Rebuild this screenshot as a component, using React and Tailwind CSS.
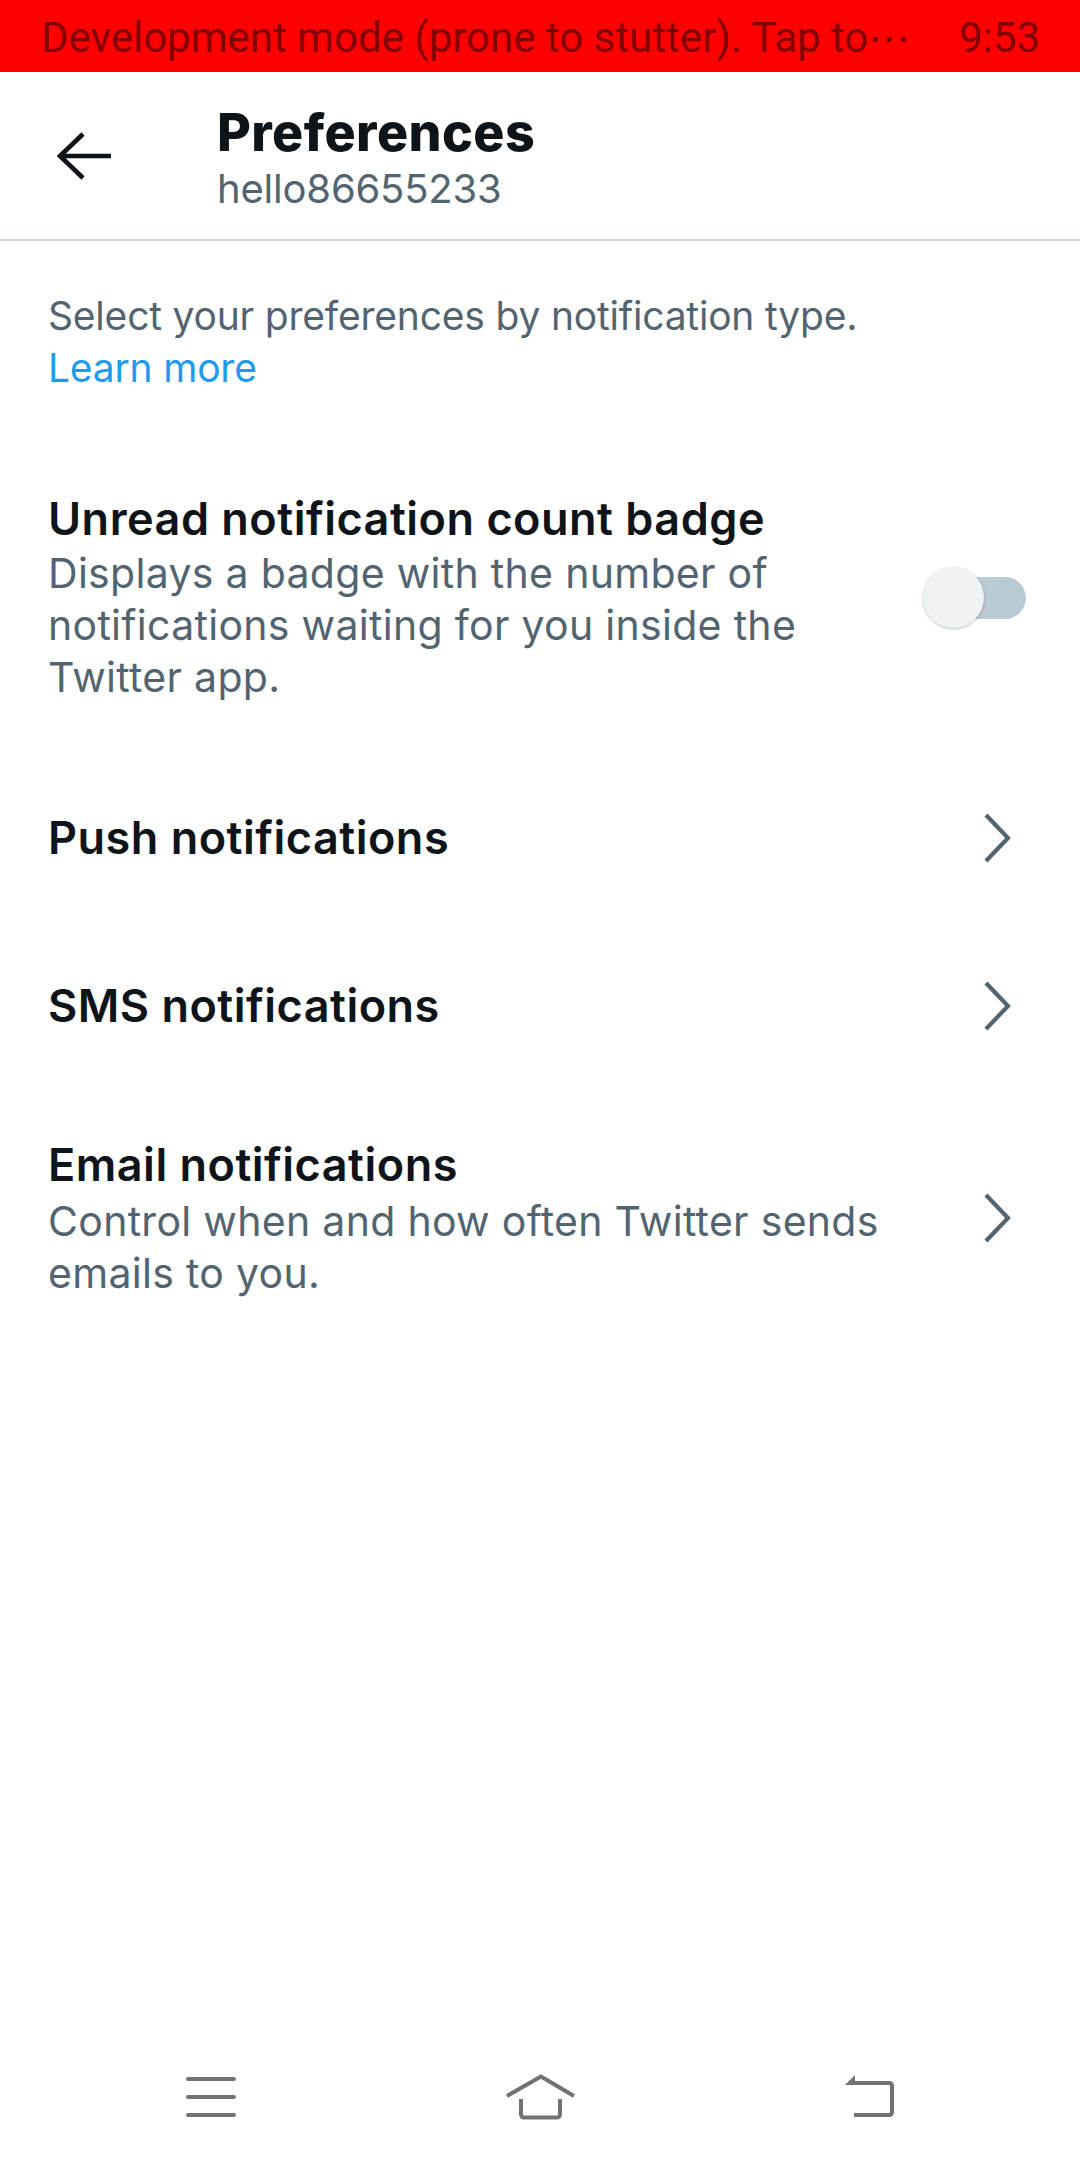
import React from "react";

function Chevron() {
  return (
    <svg width="28" height="50" viewBox="0 0 28 50" fill="none" className="shrink-0">
      <polyline points="3,2 25,25 3,48" stroke="#536471" strokeWidth="4.2" strokeLinejoin="miter" />
    </svg>
  );
}

export default function App() {
  return (
    <div className="w-[1080px] h-[2160px] bg-white flex flex-col font-['Inter','Roboto',sans-serif] overflow-hidden">
      {/* Status / debug bar */}
      <div className="h-[72px] shrink-0 bg-[#ff0000] flex items-center justify-between pl-[41px] pr-[40px] pt-[4px] font-['Roboto',sans-serif] text-[42px] text-[#840000] leading-none">
        <span>Development mode (prone to stutter). Tap to⋯</span>
        <span>9:53</span>
      </div>

      {/* Header */}
      <div className="h-[169px] shrink-0 flex border-b-2 border-[#cfd9de]">
        <div className="self-center ml-[56px] w-[58px] flex items-center">
          <svg width="58" height="50" viewBox="0 0 58 50" fill="none">
            <path d="M4 25 H55 M27 3 L4 25 L27 47" stroke="#0f1419" strokeWidth="4.6" strokeLinejoin="miter" />
          </svg>
        </div>
        <div className="ml-[103px] pt-[31px] flex flex-col">
          <div className="text-[52px] leading-[60px] font-extrabold text-[#0f1419] tracking-[0.4px]">Preferences</div>
          <div className="text-[40px] leading-[52px] text-[#536471] tracking-[-0.2px]">hello86655233</div>
        </div>
      </div>

      {/* Content */}
      <div className="flex-1 flex flex-col">
        <div className="pt-[49px] pb-[48px] px-[48px] text-[39px] leading-[52px] tracking-[-0.2px]">
          <div className="text-[#536471]">Select your preferences by notification type.</div>
          <div className="text-[#1d9bf0]">Learn more</div>
        </div>

        {/* Unread badge row */}
        <div className="flex items-center pl-[48px] pr-[54px] pt-[49px] pb-[51px]">
          <div className="flex-1 pr-[60px]">
            <div className="text-[45px] leading-[56px] font-semibold text-[#0f1419] tracking-[0.5px]">Unread notification count badge</div>
            <div className="text-[41px] leading-[52px] text-[#536471] tracking-[0.3px] max-w-[790px]">
              Displays a badge with the number of notifications waiting for you inside the Twitter app.
            </div>
          </div>
          <div className="relative w-[103px] h-[61px] shrink-0">
            <div className="absolute right-0 top-[10px] w-[94px] h-[42px] rounded-full bg-[#b9cad3]" />
            <div className="absolute left-0 top-0 w-[61px] h-[61px] rounded-full bg-[#eff3f4] shadow-[0_1px_3px_rgba(0,0,0,0.25)]" />
          </div>
        </div>

        {/* Push */}
        <div className="h-[168px] flex items-center pl-[48px] pr-[69px]">
          <div className="flex-1 text-[45px] leading-[56px] font-semibold text-[#0f1419] tracking-[0.5px]">Push notifications</div>
          <Chevron />
        </div>

        {/* SMS */}
        <div className="h-[168px] flex items-center pl-[48px] pr-[69px]">
          <div className="flex-1 text-[45px] leading-[56px] font-semibold text-[#0f1419] tracking-[0.5px]">SMS notifications</div>
          <Chevron />
        </div>

        {/* Email */}
        <div className="flex items-center pl-[48px] pr-[69px] pt-[47px] pb-[48px]">
          <div className="flex-1 pr-[40px]">
            <div className="text-[45px] leading-[56px] font-semibold text-[#0f1419] tracking-[0.5px]">Email notifications</div>
            <div className="text-[41px] leading-[52px] text-[#536471] tracking-[0.3px] mt-[2px]">
              Control when and how often Twitter sends emails to you.
            </div>
          </div>
          <Chevron />
        </div>
      </div>

      {/* Android nav bar */}
      <div className="h-[126px] shrink-0 bg-white flex items-center justify-center gap-[270px]">
        <svg width="50" height="42" viewBox="0 0 50 42" fill="none">
          <path d="M2 3 H48 M2 21 H48 M2 39 H48" stroke="#727272" strokeWidth="4" strokeLinecap="round" />
        </svg>
        <svg width="69" height="46" viewBox="2 0 69 46" fill="none">
          <path d="M3 22 L37 2.5 L70 22" stroke="#727272" strokeWidth="4" strokeLinejoin="round" />
          <path d="M17 25 V40 Q17 43.5 20.5 43.5 H52.5 Q56 43.5 56 40 V25" stroke="#727272" strokeWidth="4" />
        </svg>
        <svg width="49" height="46" viewBox="2 0 49 46" fill="none">
          <polygon points="2,11 12,1 12,11" fill="#727272" />
          <path d="M11 9 H46 Q49 9 49 12 V38 Q49 41 46 41 H11" stroke="#727272" strokeWidth="4" />
        </svg>
      </div>
    </div>
  );
}
